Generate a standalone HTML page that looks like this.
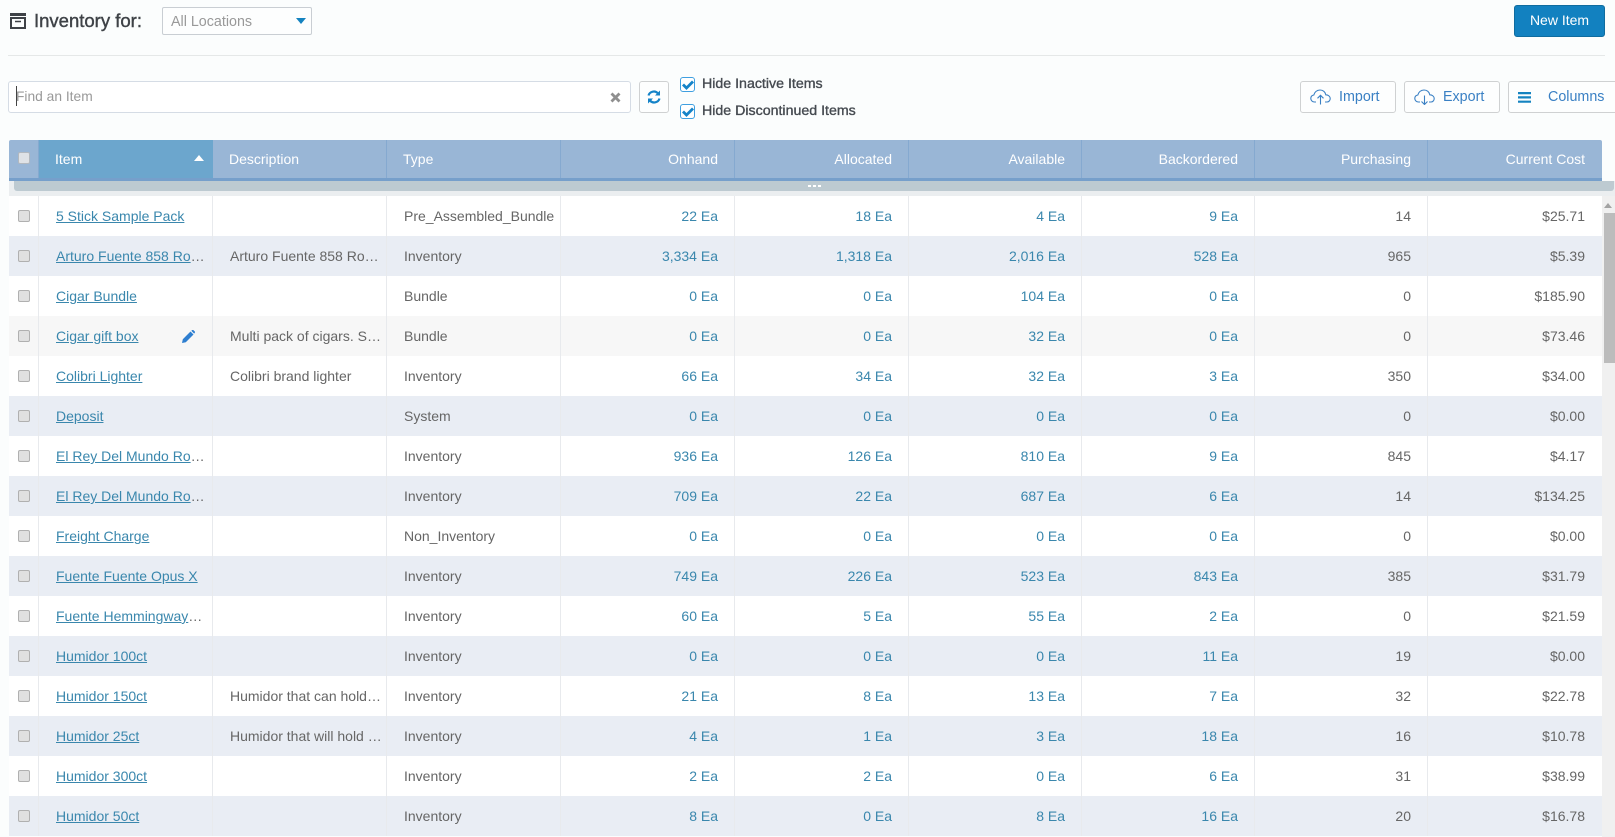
<!DOCTYPE html>
<html><head><meta charset="utf-8"><title>Inventory</title>
<style>
*{box-sizing:border-box}
html,body{margin:0;padding:0;width:1615px;height:837px;overflow:hidden;background:#fbfdfd;font-family:"Liberation Sans",Arial,sans-serif;font-size:14px;color:#666}
#page{position:relative;width:1615px;height:837px;overflow:hidden;background:#fbfdfd}
.a{position:absolute}
.btn{position:absolute;top:81px;height:32px;width:96px;border:1px solid #cfd1d2;border-radius:3px;background:#fdfefe;color:#3a80c4;font-size:14.300px;line-height:28px}
.lbl{position:absolute;left:702px;color:#454a50;font-size:14.200px;-webkit-text-stroke:.35px #454a50;white-space:nowrap}
.cb{position:absolute;left:680px;width:15px;height:15px;border:1px solid #3f9fe0;border-radius:3px;background:#fff}
#hd{position:absolute;left:9px;top:140px;width:1593px;height:41px;background:#99b6d6;border-bottom:3px solid #769fcb;border-radius:2px 2px 0 0}
#hd div{position:absolute;top:0;height:38px;line-height:38px;color:#fff;font-size:14px;border-right:1px solid #85a9d0;white-space:nowrap}
#hd .r{text-align:right;padding-right:16px}
table{position:absolute;left:9px;top:196px;width:1593px;border-collapse:separate;border-spacing:0;table-layout:fixed}
td{height:40px;padding:0;border-right:1px solid #e8eaed;white-space:nowrap;overflow:hidden;text-overflow:ellipsis;color:#666;font-size:14px;vertical-align:middle}
tr:nth-child(even) td{background:#e9edf4}
tr:nth-child(odd) td{background:#fff}
tr.h td{background:#f7f7f7}
td:nth-child(1){position:relative}
td:nth-child(1) i{position:absolute;left:9px;top:14px;width:12px;height:12px;background:#e0e0e0;border:1px solid #b0b0b0;border-radius:2px}
td:nth-child(2){padding:0 6px 0 17px}
td:nth-child(2) a{color:#3a87ad;text-decoration:underline}
td:nth-child(3){padding:0 4px 0 17px}
td:nth-child(4){padding-left:17px}
td.n{text-align:right;padding-right:16px;color:#3a87ad}
td.g{text-align:right;padding-right:16px;color:#666}
td:last-child{border-right:0;padding-right:17px}
</style></head><body><div id="page">

<svg class="a" style="left:10px;top:13px" width="16" height="16" viewBox="0 0 16 16" fill="none" stroke="#3e4247" stroke-width="2"><path d="M0 1.500h16" stroke-width="3"/><path d="M1 5h14v10H1z"/><path d="M5 8.500h6" stroke-width="1.500"/></svg>
<div class="a" style="left:34px;top:10px;font-size:18.500px;line-height:22px;color:#3e4247;-webkit-text-stroke:.4px #3e4247;white-space:nowrap">Inventory for:</div>
<div class="a" style="left:162px;top:7px;width:150px;height:28px;border:1px solid #c9ced3;border-radius:2px;background:#fdfefe"></div>
<div class="a" style="left:171px;top:13px;font-size:14.300px;line-height:18px;color:#999">All Locations</div>
<div class="a" style="left:296px;top:18px;width:0;height:0;border-left:5px solid transparent;border-right:5px solid transparent;border-top:6px solid #1583c0"></div>
<div class="a" style="left:1514px;top:5px;width:91px;height:32px;background:#1281c0;border:1px solid #0f6c9f;border-radius:3px;color:#fff;text-align:center;line-height:29px;font-size:14px">New Item</div>
<div class="a" style="left:8px;top:55px;width:1597px;height:1px;background:#e5e8e8"></div>

<div class="a" style="left:8px;top:81px;width:623px;height:32px;border:1px solid #d5dce5;border-radius:3px;background:#fff"></div>
<div class="a" style="left:16px;top:86px;width:1px;height:20px;background:#444"></div>
<div class="a" style="left:16px;top:88px;font-size:13.800px;line-height:18px;color:#999">Find an Item</div>
<svg class="a" style="left:610px;top:92px" width="11" height="11" viewBox="0 0 11 11" stroke="#8f8f8f" stroke-width="2.800"><path d="M1.500 1.500l8 8M9.500 1.500l-8 8"/></svg>
<div class="a" style="left:639px;top:81px;width:30px;height:32px;border:1px solid #cfd1d2;border-radius:3px;background:#fdfefe"></div>
<svg class="a" style="left:647px;top:90px" width="14" height="14" viewBox="0 0 14 14" fill="none" stroke="#1583c8" stroke-width="2.200"><path d="M1.500 5.500A5.500 5.500 0 0 1 11 3.500"/><path d="M12.500 8.500A5.500 5.500 0 0 1 3 10.500"/><path d="M13 .5v5h-5z" fill="#1583c8" stroke="none"/><path d="M1 13.500v-5h5z" fill="#1583c8" stroke="none"/></svg>

<div class="cb" style="top:77px"></div>
<svg class="a" style="left:682px;top:80px" width="12" height="10" viewBox="0 0 12 10" fill="none" stroke="#1583c8" stroke-width="2.800"><path d="M1 4.500l3.500 3.500 6.500-6.500"/></svg>
<div class="lbl" style="top:76px;line-height:17px">Hide Inactive Items</div>
<div class="cb" style="top:104px"></div>
<svg class="a" style="left:682px;top:107px" width="12" height="10" viewBox="0 0 12 10" fill="none" stroke="#1583c8" stroke-width="2.800"><path d="M1 4.500l3.500 3.500 6.500-6.500"/></svg>
<div class="lbl" style="top:103px;line-height:17px">Hide Discontinued Items</div>

<div class="btn" style="left:1300px"><span class="a" style="left:38px;top:1px">Import</span></div>
<svg class="a" style="left:1310px;top:89px" width="21" height="16" viewBox="0 0 21 16" fill="none" stroke="#3a80c4" stroke-width="1.100"><path d="M6 13H4.500C2.500 13 .8 11.500.8 9.500c0-1.800 1.200-3.200 3-3.500C4.500 3 7 1 10 1c3 0 5.300 2 5.800 4.800 2.400 0 4.400 1.600 4.400 3.800 0 2-1.500 3.400-3.400 3.400H15"/><path d="M10.500 15.500V6.500M7.500 9.300l3-3 3 3"/></svg>
<div class="btn" style="left:1404px"><span class="a" style="left:38px;top:1px">Export</span></div>
<svg class="a" style="left:1414px;top:89px" width="21" height="16" viewBox="0 0 21 16" fill="none" stroke="#3a80c4" stroke-width="1.100"><path d="M6 13H4.500C2.500 13 .8 11.500.8 9.500c0-1.800 1.200-3.200 3-3.500C4.500 3 7 1 10 1c3 0 5.300 2 5.800 4.800 2.400 0 4.400 1.600 4.400 3.800 0 2-1.500 3.400-3.400 3.400H15"/><path d="M10.500 6.500v9M7.500 12.500l3 3 3-3"/></svg>
<div class="btn" style="left:1508px;width:110px"><span class="a" style="left:39px;top:1px">Columns</span></div>
<svg class="a" style="left:1518px;top:92px" width="13" height="11" viewBox="0 0 13 11" fill="#1583c0"><path d="M0 0h13v2.200H0zM0 4.300h13v2.200H0zM0 8.600h13v2.200H0z"/></svg>

<div id="hd">
<div style="left:0;width:30px"></div>
<div style="left:30px;width:174px;background:#6ca6cd;padding-left:16px;border-right:0">Item</div>
<div style="left:204px;width:174px;padding-left:16px">Description</div>
<div style="left:378px;width:174px;padding-left:16px">Type</div>
<div class="r" style="left:552px;width:174px">Onhand</div>
<div class="r" style="left:726px;width:174px">Allocated</div>
<div class="r" style="left:900px;width:173px">Available</div>
<div class="r" style="left:1073px;width:173px">Backordered</div>
<div class="r" style="left:1246px;width:173px">Purchasing</div>
<div class="r" style="left:1419px;width:174px;border-right:0;padding-right:17px">Current Cost</div>
</div>
<div class="a" style="left:18px;top:152px;width:12px;height:12px;background:#dfe2e6;border:1px solid #b2b8bf;border-radius:2px"></div>
<div class="a" style="left:194px;top:155px;width:0;height:0;border-left:5px solid transparent;border-right:5px solid transparent;border-bottom:6px solid #fff"></div>

<div class="a" style="left:9px;top:181px;width:1606px;height:15px;background:#ebeef0"></div>
<div class="a" style="left:14px;top:181px;width:1600px;height:10px;background:#bdcad1;border-radius:0 0 3px 3px"></div>
<div class="a" style="left:808px;top:185px;width:13px;height:2px;background-image:linear-gradient(90deg,#fff 3px,transparent 3px);background-size:5px 2px"></div>

<table>
<colgroup><col style="width:30px"><col style="width:174px"><col style="width:174px"><col style="width:174px"><col style="width:174px"><col style="width:174px"><col style="width:173px"><col style="width:173px"><col style="width:173px"><col style="width:174px"></colgroup>
<tr><td><i></i></td><td><a>5 Stick Sample Pack</a></td><td></td><td>Pre_Assembled_Bundle</td><td class="n">22 Ea</td><td class="n">18 Ea</td><td class="n">4 Ea</td><td class="n">9 Ea</td><td class="g">14</td><td class="g">$25.71</td></tr>
<tr><td><i></i></td><td><a>Arturo Fuente 858 Rosado Sungrown</a></td><td>Arturo Fuente 858 Rosado Sungrown</td><td>Inventory</td><td class="n">3,334 Ea</td><td class="n">1,318 Ea</td><td class="n">2,016 Ea</td><td class="n">528 Ea</td><td class="g">965</td><td class="g">$5.39</td></tr>
<tr><td><i></i></td><td><a>Cigar Bundle</a></td><td></td><td>Bundle</td><td class="n">0 Ea</td><td class="n">0 Ea</td><td class="n">104 Ea</td><td class="n">0 Ea</td><td class="g">0</td><td class="g">$185.90</td></tr>
<tr class="h"><td><i></i></td><td><a>Cigar gift box</a></td><td>Multi pack of cigars. Several types</td><td>Bundle</td><td class="n">0 Ea</td><td class="n">0 Ea</td><td class="n">32 Ea</td><td class="n">0 Ea</td><td class="g">0</td><td class="g">$73.46</td></tr>
<tr><td><i></i></td><td><a>Colibri Lighter</a></td><td>Colibri brand lighter</td><td>Inventory</td><td class="n">66 Ea</td><td class="n">34 Ea</td><td class="n">32 Ea</td><td class="n">3 Ea</td><td class="g">350</td><td class="g">$34.00</td></tr>
<tr><td><i></i></td><td><a>Deposit</a></td><td></td><td>System</td><td class="n">0 Ea</td><td class="n">0 Ea</td><td class="n">0 Ea</td><td class="n">0 Ea</td><td class="g">0</td><td class="g">$0.00</td></tr>
<tr><td><i></i></td><td><a>El Rey Del Mundo Robusto Single</a></td><td></td><td>Inventory</td><td class="n">936 Ea</td><td class="n">126 Ea</td><td class="n">810 Ea</td><td class="n">9 Ea</td><td class="g">845</td><td class="g">$4.17</td></tr>
<tr><td><i></i></td><td><a>El Rey Del Mundo Robusto Box</a></td><td></td><td>Inventory</td><td class="n">709 Ea</td><td class="n">22 Ea</td><td class="n">687 Ea</td><td class="n">6 Ea</td><td class="g">14</td><td class="g">$134.25</td></tr>
<tr><td><i></i></td><td><a>Freight Charge</a></td><td></td><td>Non_Inventory</td><td class="n">0 Ea</td><td class="n">0 Ea</td><td class="n">0 Ea</td><td class="n">0 Ea</td><td class="g">0</td><td class="g">$0.00</td></tr>
<tr><td><i></i></td><td><a>Fuente Fuente Opus X</a></td><td></td><td>Inventory</td><td class="n">749 Ea</td><td class="n">226 Ea</td><td class="n">523 Ea</td><td class="n">843 Ea</td><td class="g">385</td><td class="g">$31.79</td></tr>
<tr><td><i></i></td><td><a>Fuente Hemmingway Short Story</a></td><td></td><td>Inventory</td><td class="n">60 Ea</td><td class="n">5 Ea</td><td class="n">55 Ea</td><td class="n">2 Ea</td><td class="g">0</td><td class="g">$21.59</td></tr>
<tr><td><i></i></td><td><a>Humidor 100ct</a></td><td></td><td>Inventory</td><td class="n">0 Ea</td><td class="n">0 Ea</td><td class="n">0 Ea</td><td class="n">11 Ea</td><td class="g">19</td><td class="g">$0.00</td></tr>
<tr><td><i></i></td><td><a>Humidor 150ct</a></td><td>Humidor that can hold 150 cigars</td><td>Inventory</td><td class="n">21 Ea</td><td class="n">8 Ea</td><td class="n">13 Ea</td><td class="n">7 Ea</td><td class="g">32</td><td class="g">$22.78</td></tr>
<tr><td><i></i></td><td><a>Humidor 25ct</a></td><td>Humidor that will hold 25 cigars</td><td>Inventory</td><td class="n">4 Ea</td><td class="n">1 Ea</td><td class="n">3 Ea</td><td class="n">18 Ea</td><td class="g">16</td><td class="g">$10.78</td></tr>
<tr><td><i></i></td><td><a>Humidor 300ct</a></td><td></td><td>Inventory</td><td class="n">2 Ea</td><td class="n">2 Ea</td><td class="n">0 Ea</td><td class="n">6 Ea</td><td class="g">31</td><td class="g">$38.99</td></tr>
<tr><td><i></i></td><td><a>Humidor 50ct</a></td><td></td><td>Inventory</td><td class="n">8 Ea</td><td class="n">0 Ea</td><td class="n">8 Ea</td><td class="n">16 Ea</td><td class="g">20</td><td class="g">$16.78</td></tr>
</table>

<svg class="a" style="left:182px;top:330px" width="13" height="13" viewBox="0 0 13 13"><path d="M0 13l.8-3.800L8.500 1.500l3 3L3.800 12.200zM9.300.8l1-.8c.4-.2.800-.2 1.100.1l1.500 1.500c.3.300.3.700 0 1l-.8 1z" fill="#2f7fd0"/></svg>

<div class="a" style="left:1602px;top:196px;width:13px;height:641px;background:#f0f0f0"></div>
<div class="a" style="left:1604px;top:203px;width:0;height:0;border-left:4px solid transparent;border-right:4px solid transparent;border-bottom:5px solid #a3a3a3"></div>
<div class="a" style="left:1604px;top:213px;width:11px;height:150px;background:#bcbcbc"></div>
</div></body></html>
